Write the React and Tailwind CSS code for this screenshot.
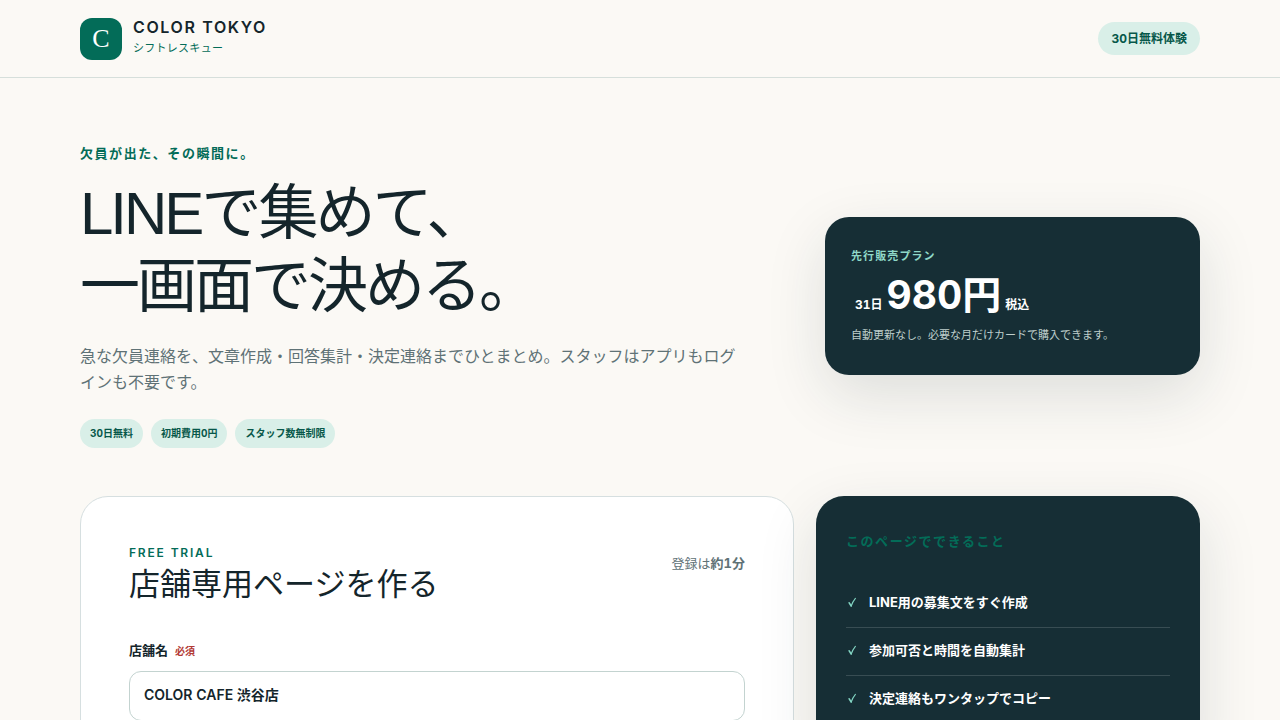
import React, { useState } from "react";

const heroTags = ["30日無料", "初期費用0円", "スタッフ数無制限"];

const features = [
  "LINE用の募集文をすぐ作成",
  "参加可否と時間を自動集計",
  "決定連絡もワンタップでコピー",
];

const CheckMark = () => (
  <svg
    viewBox="0 0 12 12"
    className="w-3 h-3 shrink-0 text-[#83d5c3]"
    fill="none"
    stroke="currentColor"
    strokeLinecap="round"
    aria-hidden="true"
  >
    <path d="M3.2 5.8 L5.2 9" strokeWidth="1.6" />
    <path d="M5.2 9 C6.2 6 7.6 3.6 9.4 1.4" strokeWidth="1.1" />
  </svg>
);

const Header = () => (
  <header className="border-b border-[#d6dfdb]">
    <div className="max-w-[1120px] mx-auto h-[77px] flex items-center justify-between">
      <a href="#top" className="flex items-center gap-[11px]">
        <span className="w-[42px] h-[42px] rounded-xl bg-[#036c58] text-white flex items-center justify-center text-[26px] leading-none font-['Liberation_Serif',serif]">
          C
        </span>
        <span className="flex flex-col">
          <span className="text-base leading-[18px] font-semibold tracking-widest">
            COLOR TOKYO
          </span>
          <span className="text-[11px] leading-6 tracking-wide text-[#036c58]">
            シフトレスキュー
          </span>
        </span>
      </a>
      <span className="rounded-full bg-[#d9efe8] text-[#07584a] text-xs font-bold px-[13px] py-2 leading-[17px]">
        30日無料体験
      </span>
    </div>
  </header>
);

const Hero = () => (
  <section className="flex items-center justify-between gap-12 pt-[65px] pb-12">
    <div>
      <p className="text-[13px] leading-5 font-bold tracking-[0.12em] text-[#036c58]">
        欠員が出た、その瞬間に。
      </p>
      <h1 className="mt-[14px] text-[60px] leading-[73px] font-normal tracking-tighter font-['Liberation_Sans','Noto_Sans_CJK_JP',sans-serif]">
        LINEで集めて、
        <br />
        一画面で決める。
      </h1>
      <p className="mt-5 max-w-[660px] text-base leading-[26px] text-[#5f7276]">
        急な欠員連絡を、文章作成・回答集計・決定連絡までひとまとめ。スタッフはアプリもログインも不要です。
      </p>
      <ul className="mt-6 flex gap-2">
        {heroTags.map((tag) => (
          <li
            key={tag}
            className="rounded-full bg-[#d9efe8] text-[#07584a] text-[10px] font-bold px-[10px] py-[6px] leading-[17px]"
          >
            {tag}
          </li>
        ))}
      </ul>
    </div>
    <div className="w-[375px] shrink-0 rounded-3xl bg-[#162e35] text-white p-[26px] shadow-[0_20px_60px_rgba(22,46,53,0.13)]">
      <p className="text-[11px] leading-[26px] font-bold tracking-widest text-[#8fd8c8]">
        先行販売プラン
      </p>
      <p className="flex items-baseline font-bold text-[39px] leading-[52px]">
        <span className="mx-1 text-xs leading-none">31日</span>
        980円
        <span className="mx-1 text-xs leading-none">税込</span>
      </p>
      <p className="text-[11px] leading-7 text-[#bfcfcc]">
        自動更新なし。必要な月だけカードで購入できます。
      </p>
    </div>
  </section>
);

const TrialForm = () => {
  const [storeName, setStoreName] = useState("COLOR CAFE 渋谷店");

  return (
    <form
      onSubmit={(e) => e.preventDefault()}
      className="flex-1 rounded-[28px] border border-[#d6dfe0] bg-white p-12"
    >
      <div className="flex items-start justify-between">
        <div>
          <p className="text-xs leading-4 font-semibold tracking-[0.15em] text-[#036c58]">
            FREE TRIAL
          </p>
          <h2 className="text-[31px] leading-[45px] font-normal">
            店舗専用ページを作る
          </h2>
        </div>
        <p className="mt-2 text-[13px] leading-5 text-[#5f7276]">
          登録は<b>約1分</b>
        </p>
      </div>
      <label
        htmlFor="store"
        className="mt-8 flex items-baseline gap-[7px] text-[13px] leading-6 font-bold"
      >
        店舗名
        <span className="text-[10px] text-[#b23a35]">必須</span>
      </label>
      <input
        id="store"
        type="text"
        value={storeName}
        onChange={(e) => setStoreName(e.target.value)}
        className="mt-2 w-full h-[50px] rounded-xl border border-[#c3d3d0] bg-white px-[14px] pb-1 text-sm font-semibold outline-none"
      />
    </form>
  );
};

const FeaturePanel = () => (
  <aside className="w-[384px] shrink-0 rounded-[28px] bg-[#162e35] text-white p-[30px] shadow-[0_20px_60px_rgba(22,46,53,0.13)]">
    <h2 className="mt-[3px] text-[13px] leading-6 font-bold tracking-[0.12em] text-[#036c58]">
      このページでできること
    </h2>
    <ul className="mt-[27px]">
      {features.map((feature) => (
        <li
          key={feature}
          className="flex items-center gap-[11px] h-12 pb-0.5 border-b border-white/15 text-[13px] font-bold"
        >
          <CheckMark />
          {feature}
        </li>
      ))}
    </ul>
  </aside>
);

const App = () => {
  return (
    <div
      id="top"
      className="min-h-screen bg-[#fbf9f5] text-[#14252b] tabular-nums font-['Inter','Noto_Sans_CJK_JP',sans-serif]"
    >
      <Header />
      <main className="max-w-[1120px] mx-auto pb-16">
        <Hero />
        <div className="flex gap-[22px]">
          <TrialForm />
          <FeaturePanel />
        </div>
      </main>
    </div>
  );
};

export default App;
